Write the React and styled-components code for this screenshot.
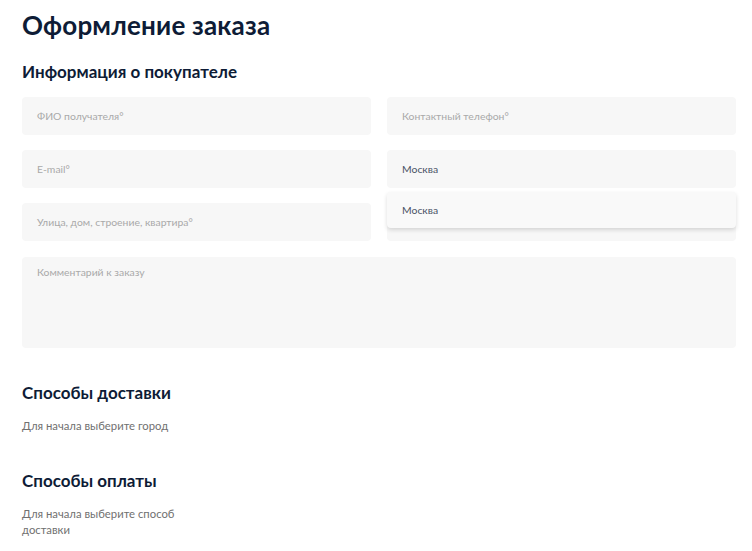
import React from 'react'
import styled, { createGlobalStyle } from 'styled-components'

const GlobalStyle = createGlobalStyle`
  html, body {
    margin: 0;
    padding: 0;
    background: #fff;
  }
  body {
    font-family: Lato, "Noto Sans", sans-serif;
    color: #0e1c36;
  }
`;

const Page = styled.div`
  padding: 7px 16px 20px 22px;
`;

const Title = styled.h1`
  margin: 0;
  font-size: 26px;
  line-height: 36px;
  font-weight: 700;
  color: #0e1c36;
  letter-spacing: 0.2px;
`;

const SectionTitle = styled.h2`
  margin: ${p => p.$top || 0}px 0 0;
  font-size: 17px;
  line-height: 24px;
  font-weight: 700;
  color: #0e1c36;
`;

const Grid = styled.div`
  display: grid;
  grid-template-columns: 1fr 1fr;
  column-gap: 16px;
  row-gap: 15px;
  margin-top: 13px;
`;

const Cell = styled.div`
  position: relative;
  grid-column: ${p => (p.$wide ? '1 / -1' : 'auto')};
  margin-top: ${p => (p.$wide ? 1 : 0)}px;
`;

const Field = styled.div`
  box-sizing: border-box;
  height: ${p => p.$height || 38}px;
  background: #f7f7f7;
  border-radius: 4px;
  padding: ${p => (p.$area ? '9px 15px' : '0 15px')};
  display: flex;
  align-items: ${p => (p.$area ? 'flex-start' : 'center')};
  font-size: 10.4px;
  color: ${p => (p.$filled ? '#4a5366' : '#a9a9a9')};
`;

const Dropdown = styled.div`
  position: absolute;
  left: 0;
  right: 0;
  top: calc(100% + 4px);
  height: 36px;
  box-sizing: border-box;
  padding: 0 15px;
  display: flex;
  align-items: center;
  background: #f9f9f9;
  border-radius: 4px;
  box-shadow: 0 2px 4px rgba(0, 0, 0, 0.14);
  font-size: 10.4px;
  color: #4a5366;
  z-index: 2;
`;

const Note = styled.p`
  margin: 13px 0 0;
  max-width: 185px;
  font-size: 11.3px;
  line-height: 16px;
  color: #707070;
`;

export default function App() {
  return (
    <>
      <GlobalStyle />
      <Page>
        <Title>Оформление заказа</Title>
        <SectionTitle $top={17}>Информация о покупателе</SectionTitle>
        <Grid>
          <Cell><Field>ФИО получателя°</Field></Cell>
          <Cell><Field>Контактный телефон°</Field></Cell>
          <Cell><Field>E-mail°</Field></Cell>
          <Cell>
            <Field $filled>Москва</Field>
            <Dropdown>Москва</Dropdown>
          </Cell>
          <Cell><Field>Улица, дом, строение, квартира°</Field></Cell>
          <Cell><Field /></Cell>
          <Cell $wide>
            <Field $area $height={91}>Комментарий к заказу</Field>
          </Cell>
        </Grid>
        <SectionTitle $top={33}>Способы доставки</SectionTitle>
        <Note>Для начала выберите город</Note>
        <SectionTitle $top={35}>Способы оплаты</SectionTitle>
        <Note>Для начала выберите способ доставки</Note>
      </Page>
    </>
  )
}
